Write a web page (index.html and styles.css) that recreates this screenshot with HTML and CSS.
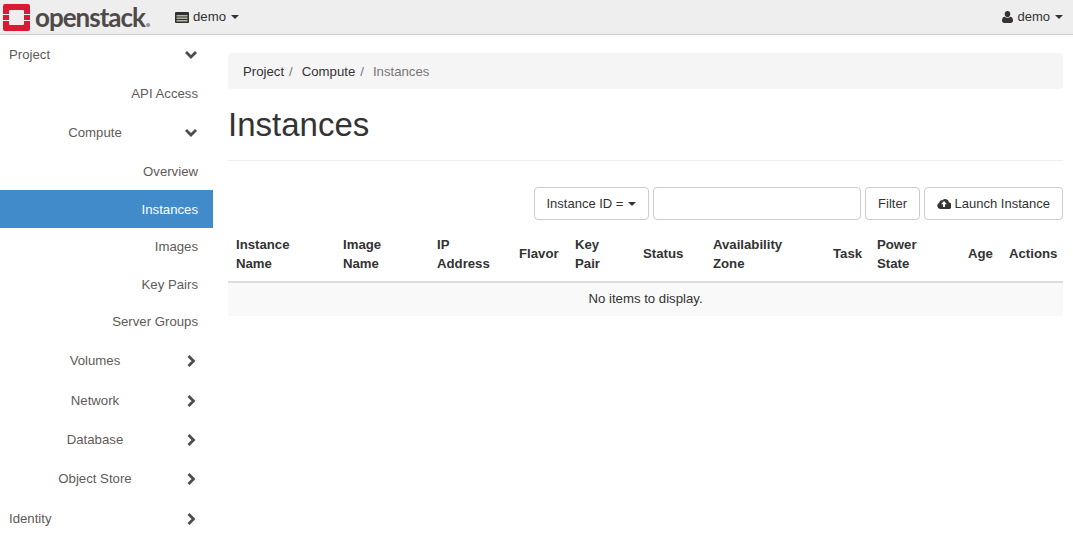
FILE: index.html
```html
<!DOCTYPE html>
<html lang="en">
<head>
    <meta charset="UTF-8">
    <title>Instances</title>
    <link rel="stylesheet" href="styles.css">
</head>
<body>

    <header class="topbar">
        <a class="brand" href="#">
            <svg class="brand-logo" viewBox="0 0 27 27" width="27" height="27">
                <path fill="#da1a32" d="M2 0h23a2 2 0 0 1 2 2v8h-6V7a1 1 0 0 0-1-1H7a1 1 0 0 0-1 1v3H0V2a2 2 0 0 1 2-2z"/>
                <path fill="#da1a32" d="M0 17h6v3a1 1 0 0 0 1 1h13a1 1 0 0 0 1-1v-3h6v8a2 2 0 0 1-2 2H2a2 2 0 0 1-2-2z"/>
                <rect fill="#da1a32" x="0" y="11" width="6" height="5"/>
                <rect fill="#da1a32" x="21" y="11" width="6" height="5"/>
            </svg>
            <span class="brand-name">openstack<span class="brand-dot">.</span></span>
        </a>
        <div class="project-menu">
            <svg class="icon-table" viewBox="0 0 14 11" width="14" height="11">
                <rect width="14" height="11" rx="1" fill="#2f2f2f"/>
                <path fill="#b5b5a8" d="M1.500 3h11v1.500h-11zM1.500 5.500h11V7h-11zM1.500 8h11v1.500h-11z"/>
            </svg>
            <span>demo</span>
            <span class="caret"></span>
        </div>
        <div class="user-menu">
            <svg class="icon-user" viewBox="0 0 11 12" width="11" height="12">
                <path fill="#333" d="M5.500 0C7.200 0 8.300 1.300 8.300 3S7.200 6.300 5.500 6.300 2.700 4.700 2.700 3 3.800 0 5.500 0zM2.800 5.800c.7.700 1.600 1.200 2.700 1.200s2-.5 2.700-1.200C10 6 11 7.300 11 9.500 11 11 10 12 8.800 12H2.200C1 12 0 11 0 9.500 0 7.300 1 6 2.800 5.800z"/>
            </svg>
            <span>demo</span>
            <span class="caret"></span>
        </div>
    </header>

    <div class="page">

        <nav class="sidebar">
            <a class="side-row side-top" href="#"><span class="side-label">Project</span><svg class="chev" viewBox="0 0 12 12"><path d="M1 3l5 5 5-5"/></svg></a>
            <a class="side-row side-link" href="#">API Access</a>
            <a class="side-row side-sub" href="#"><span class="side-label">Compute</span><svg class="chev" viewBox="0 0 12 12"><path d="M1 3l5 5 5-5"/></svg></a>
            <a class="side-leaf tall" href="#">Overview</a>
            <a class="side-leaf tall active" href="#">Instances</a>
            <a class="side-leaf" href="#">Images</a>
            <a class="side-leaf" href="#">Key Pairs</a>
            <a class="side-leaf" href="#">Server Groups</a>
            <a class="side-row side-sub wide" href="#"><span class="side-label">Volumes</span><svg class="chev" viewBox="0 0 12 12"><path d="M3.500 1l5 5-5 5"/></svg></a>
            <a class="side-row side-sub wide" href="#"><span class="side-label">Network</span><svg class="chev" viewBox="0 0 12 12"><path d="M3.500 1l5 5-5 5"/></svg></a>
            <a class="side-row side-sub wide" href="#"><span class="side-label">Database</span><svg class="chev" viewBox="0 0 12 12"><path d="M3.500 1l5 5-5 5"/></svg></a>
            <a class="side-row side-sub wide" href="#"><span class="side-label">Object Store</span><svg class="chev" viewBox="0 0 12 12"><path d="M3.500 1l5 5-5 5"/></svg></a>
            <a class="side-row side-top wide" href="#"><span class="side-label">Identity</span><svg class="chev" viewBox="0 0 12 12"><path d="M3.500 1l5 5-5 5"/></svg></a>
        </nav>

        <main class="content">

            <ol class="breadcrumb">
                <li><a href="#">Project</a><span class="sep">/</span></li>
                <li><a href="#">Compute</a><span class="sep">/</span></li>
                <li class="current">Instances</li>
            </ol>

            <h1 class="page-title">Instances</h1>

            <div class="toolbar">
                <button class="btn" type="button">Instance ID = <span class="caret"></span></button>
                <input class="search" type="text">
                <button class="btn" type="button">Filter</button>
                <button class="btn" type="button">
                    <svg class="icon-cloud" viewBox="0 0 14 11" width="14" height="11">
                        <path fill="#333" fill-rule="evenodd" d="M3.300 11A3.200 3.200 0 0 1 2.400 4.800 2.300 2.300 0 0 1 5.500 2.300 3.700 3.700 0 0 1 12 4.500 3.300 3.300 0 0 1 10.800 11zM7 3 4 6.200h2V9h2V6.200h2z"/>
                    </svg>
                    Launch Instance
                </button>
            </div>

            <table class="data-table">
                <thead>
                    <tr>
                        <th class="c-name">Instance Name</th>
                        <th class="c-image">Image<br>Name</th>
                        <th class="c-ip">IP<br>Address</th>
                        <th class="c-flavor">Flavor</th>
                        <th class="c-key">Key<br>Pair</th>
                        <th class="c-status">Status</th>
                        <th class="c-zone">Availability<br>Zone</th>
                        <th class="c-task">Task</th>
                        <th class="c-power">Power<br>State</th>
                        <th class="c-age">Age</th>
                        <th class="c-actions">Actions</th>
                    </tr>
                </thead>
                <tbody>
                    <tr>
                        <td colspan="11">No items to display.</td>
                    </tr>
                </tbody>
            </table>

        </main>
    </div>

</body>
</html>
```

FILE: styles.css
```css
*{
    box-sizing: border-box;
}

html, body{
    height: 100%;
    overflow: hidden;
}

body{
    margin: 0;
    font-family: "Liberation Sans", Arial, sans-serif;
    font-size: 13.2px;
    line-height: 20px;
    color: #333;
    background: #fff;
}

a{
    color: inherit;
    text-decoration: none;
}

.caret{
    display: inline-block;
    width: 0;
    height: 0;
    margin-left: 1px;
    vertical-align: middle;
    border-top: 4.500px solid #333;
    border-left: 4px solid transparent;
    border-right: 4px solid transparent;
}

/* barra superior */

.topbar{
    display: flex;
    align-items: center;
    height: 35px;
    background: #eee;
    border-bottom: 1px solid #ccc;
}

.brand{
    display: flex;
    align-items: center;
    width: 175px;
    padding-left: 3px;
}

.brand-logo{
    flex: none;
}

.brand-name{
    margin-left: 5px;
    font-family: Lato, sans-serif;
    font-size: 26px;
    font-weight: 700;
    line-height: 32px;
    letter-spacing: -1px;
    white-space: nowrap;
    color: #4e4a48;
}

.brand-dot{
    color: #9a9694;
}

.project-menu{
    display: flex;
    align-items: center;
    gap: 4px;
}

.user-menu{
    display: flex;
    align-items: center;
    gap: 4px;
    margin-left: auto;
    padding-right: 10px;
    font-size: 13px;
}

/* columnas */

.page{
    display: flex;
}

.sidebar{
    flex: none;
    width: 213px;
    color: #5f5a58;
}

.side-row{
    display: flex;
    align-items: center;
    height: 39px;
}

.side-row.wide{
    height: 39.4px;
    padding-top: 2px;
}

.side-top .side-label{
    margin-left: 9px;
}

.side-sub .side-label{
    flex: none;
    width: 185px;
    padding-left: 5px;
    text-align: center;
}

.side-link{
    justify-content: flex-end;
    padding-right: 15px;
}

.side-leaf{
    display: block;
    height: 37.5px;
    padding-right: 15px;
    line-height: 37.5px;
    text-align: right;
}

.side-leaf.tall{
    height: 38px;
    line-height: 40px;
}

.side-leaf.active{
    color: #fff;
    background: #428bca;
}

.chev{
    flex: none;
    width: 12px;
    height: 12px;
    margin-left: auto;
    margin-right: 16px;
    fill: none;
    stroke: #504c4a;
    stroke-width: 2.8;
}

.content{
    flex: 1;
    min-width: 0;
    padding: 18px 10px 0 15px;
}

/* migas */

.breadcrumb{
    display: flex;
    height: 36px;
    margin: 0;
    padding: 9px 15px 7px;
    list-style: none;
    background: #f5f5f5;
    border-radius: 4px;
}

.breadcrumb .sep{
    padding: 0 9px 0 5px;
    color: #777;
}

.breadcrumb .current{
    color: #777;
}

.page-title{
    height: 72px;
    margin: 0;
    padding-top: 16px;
    font-size: 33px;
    font-weight: 400;
    line-height: 40px;
    border-bottom: 1px solid #eee;
}

/* filtros */

.toolbar{
    display: flex;
    justify-content: flex-end;
    gap: 4px;
    margin-top: 26px;
}

.btn{
    height: 33px;
    padding: 0 12px;
    font: inherit;
    font-size: 13px;
    color: #333;
    background: #fff;
    border: 1px solid #ccc;
    border-radius: 4px;
}

.search{
    width: 208px;
    height: 33px;
    background: #fff;
    border: 1px solid #ccc;
    border-radius: 4px;
}

.icon-cloud{
    vertical-align: -1px;
}

/* tabla */

.data-table{
    width: 100%;
    margin-top: 4px;
    border-collapse: collapse;
    table-layout: fixed;
}

.data-table th{
    height: 58px;
    padding: 10px 8px 8px;
    font-weight: 700;
    line-height: 19px;
    text-align: left;
    vertical-align: middle;
    border-bottom: 2px solid #ddd;
}

.data-table td{
    height: 34px;
    padding: 5px 8px 7px;
    text-align: center;
    background: #f9f9f9;
}

.c-name{ width: 107px; }
.c-image{ width: 94px; }
.c-ip{ width: 82px; }
.c-flavor{ width: 56px; }
.c-key{ width: 68px; }
.c-status{ width: 70px; }
.c-zone{ width: 120px; }
.c-task{ width: 44px; }
.c-power{ width: 91px; }
.c-age{ width: 41px; }
```
